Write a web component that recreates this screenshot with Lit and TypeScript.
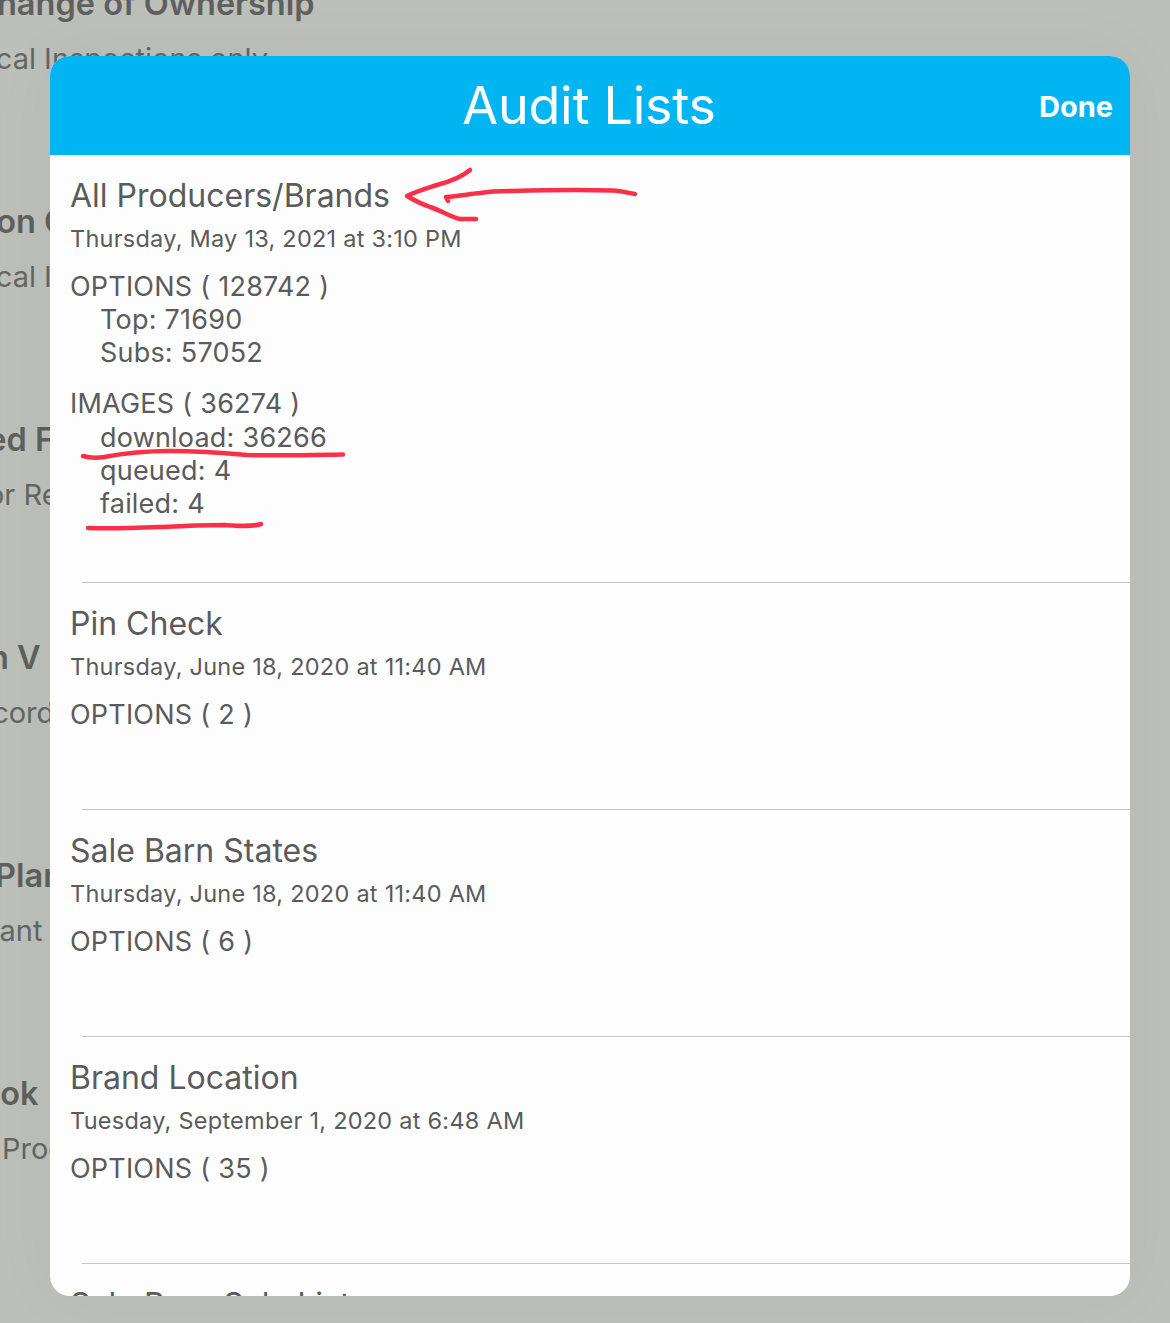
import { LitElement, html, css, svg } from "lit";
import { customElement } from "lit/decorators.js";

const bgRows = [
  { t: "Change of Ownership", s: "Local Inspections only", tx: -27, sx: -38 },
  { t: "Inspection Certificate", s: "Local Inspections", tx: -129, sx: -38 },
  { t: "Registered Forms", s: "For Records", tx: -142, sx: -29 },
  { t: "Version V 3", s: "Records", tx: -111, sx: -43 },
  { t: "Plans", s: "Plant", tx: -5, sx: -26 },
  { t: "Book", s: "Producers", tx: -41, sx: 2 },
];

const lists = [
  { name: "Pin Check", date: "Thursday, June 18, 2020 at 11:40 AM", options: "OPTIONS ( 2 )" },
  { name: "Sale Barn States", date: "Thursday, June 18, 2020 at 11:40 AM", options: "OPTIONS ( 6 )" },
  { name: "Brand Location", date: "Tuesday, September 1, 2020 at 6:48 AM", options: "OPTIONS ( 35 )" },
];

@customElement("app-root")
export class AppRoot extends LitElement {
  static styles = css`
    :host { display: block; width: 1170px; height: 1323px; position: relative; overflow: hidden;
      background: #bdbfbb; font-family: Inter, "Liberation Sans", sans-serif; }
    .page { display: flex; flex-direction: column; margin-top: -17px; }
    .bg-row { height: 218px; box-sizing: border-box; white-space: nowrap; }
    .bg-t { font-size: 32.5px; font-weight: 600; line-height: 42px; color: #5d605c; }
    .bg-s { font-size: 29px; line-height: 40px; margin-top: 14px; color: #636662; }
    .modal { position: absolute; left: 50px; top: 56px; width: 1080px; height: 1240px; border-radius: 20px;
      overflow: hidden; background: #fdfdfd; box-shadow: 0 0 70px rgba(0,0,0,.04); color: #5a5b5a; }
    .head { height: 99px; background: #00b5f1; color: #fff; display: flex; align-items: center; justify-content: center; position: relative; }
    .head h1 { margin: 0 2px 0 0; font-size: 52px; font-weight: 400; letter-spacing: -0.25px; }
    .done { position: absolute; right: 17px; top: 34px; font-size: 29px; font-weight: 700; line-height: 34px; }
    .row { height: 227px; box-sizing: border-box; border-bottom: 1px solid #c6c6c6; padding: 0 0 0 20px; position: relative; }
    .row.first { height: 428px; }
    .row::after { content: ""; position: absolute; left: 0; bottom: -1px; width: 32px; height: 1px; background: #fdfdfd; }
    .name { font-size: 32px; line-height: 40px; padding-top: 21px; }
    .date { font-size: 23.5px; line-height: 30px; margin-top: 8px; letter-spacing: 0.25px; }
    .grp { font-size: 27px; line-height: 33px; margin-top: 16px; letter-spacing: 0.2px; word-spacing: 0.2px; }
    .grp + .grp { margin-top: 18px; }
    .grp + .grp .sub:first-of-type { margin-top: 1px; }
    .sub { padding-left: 30px; }
    .marks { position: absolute; left: 0; top: 0; pointer-events: none; }
    .marks path { fill: none; stroke: #fb3048; stroke-width: 4.5; stroke-linecap: round; stroke-linejoin: round; }
  `;

  render() {
    return html`
      <div class="page">
        ${bgRows.map(r => html`<div class="bg-row">
          <div class="bg-t" style="margin-left:${r.tx}px">${r.t}</div>
          <div class="bg-s" style="margin-left:${r.sx}px">${r.s}</div>
        </div>`)}
      </div>
      <div class="modal">
        <div class="head"><h1>Audit Lists</h1><div class="done">Done</div></div>
        <div class="row first">
          <div class="name">All Producers/Brands</div>
          <div class="date">Thursday, May 13, 2021 at 3:10 PM</div>
          <div class="grp">OPTIONS ( 128742 )
            <div class="sub">Top: 71690</div>
            <div class="sub">Subs: 57052</div>
          </div>
          <div class="grp">IMAGES ( 36274 )
            <div class="sub">download: 36266</div>
            <div class="sub">queued: 4</div>
            <div class="sub">failed: 4</div>
          </div>
        </div>
        ${lists.map(l => html`<div class="row">
          <div class="name">${l.name}</div>
          <div class="date">${l.date}</div>
          <div class="grp">${l.options}</div>
        </div>`)}
        <div class="row"><div class="name">Sale Barn Sale List</div></div>
      </div>
      <svg class="marks" width="1170" height="1323" viewBox="0 0 1170 1323">
        ${svg`
          <path d="M470 170 C462 177 452 181 437 185 C425 189 415 192 407 196 C415 201 422 204 430 207 C442 211 451 217 460 219 L476 219"/>
          <path d="M448 201 L446 197 C458 196 470 194 480 193 C492 191 503 191 513 191 C550 190 590 190 613 190.5 C622 191 628 193 635 194"/>
          <path d="M83 456 C90 458 97 458 104 457 C125 453 150 451 170 451 C195 451 225 453 247 455 C280 456 315 455 343 454.5"/>
          <path d="M88 528 C110 529 135 528 160 527 C185 526 205 525 225 525 C240 526 252 527 261 524"/>
        `}
      </svg>
    `;
  }
}
